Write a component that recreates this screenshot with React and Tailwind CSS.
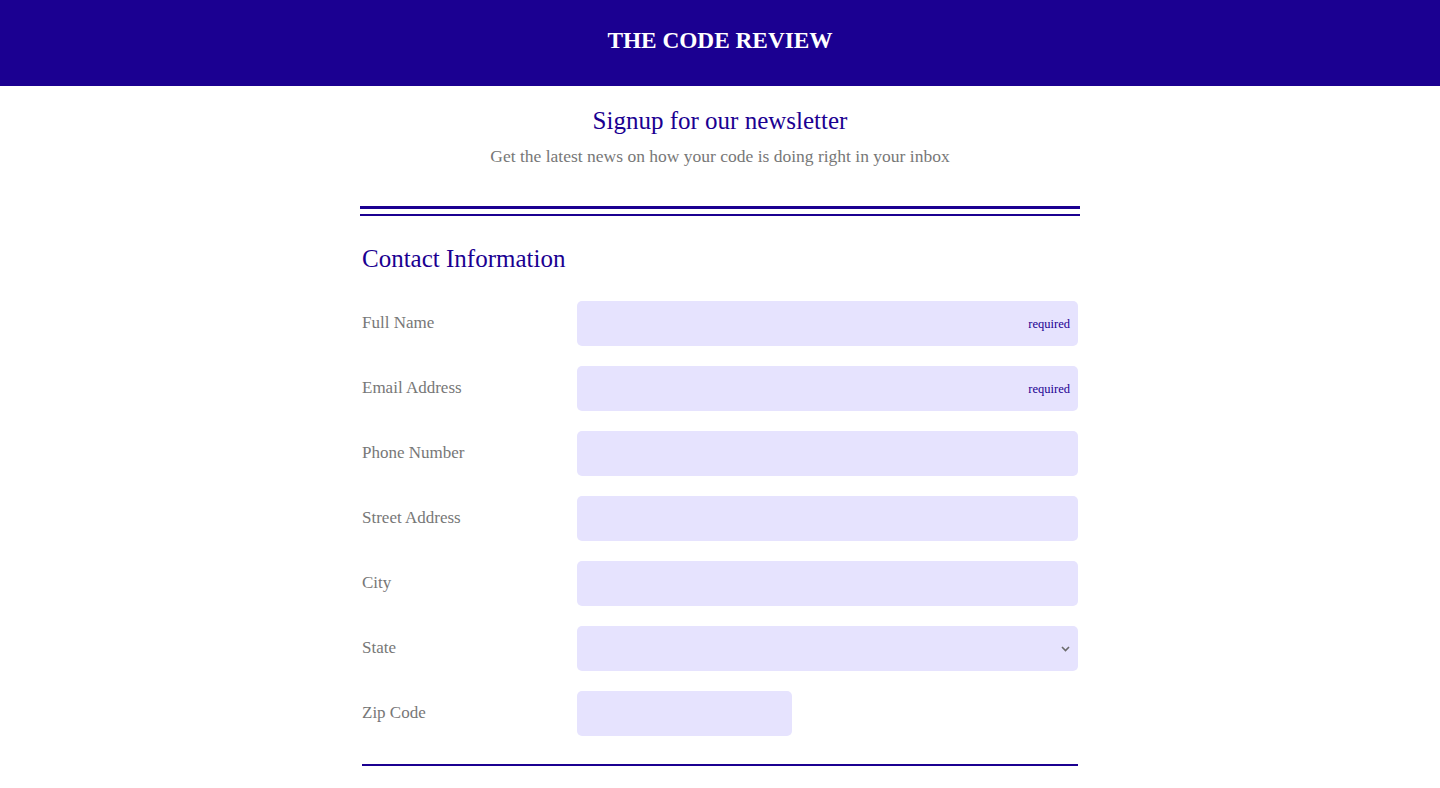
import React from "react";

const serif = "font-['Liberation_Serif','DejaVu_Serif',serif]";

const Field = ({ label, required, select, narrow }) => (
    <div className="flex items-center h-[45px]">
        <label className="w-[215px] shrink-0 text-[17px] text-[#777777] -mt-[2px]">{label}</label>
        <div className={`relative h-full ${narrow ? "w-[215px]" : "flex-1"}`}>
            {select ? (
                <select className="w-full h-full rounded-[5px] bg-[#e6e3fe] appearance-none outline-none" />
            ) : (
                <input className="w-full h-full rounded-[5px] bg-[#e6e3fe] outline-none px-3" />
            )}
            {required && (
                <span className="absolute right-[8px] top-1/2 -translate-y-1/2 text-[12.5px] text-[#1b0091]">
                    required
                </span>
            )}
            {select && (
                <svg
                    className="absolute right-[8px] top-1/2 -translate-y-1/2"
                    width="9"
                    height="6"
                    viewBox="0 0 9 6"
                    fill="none"
                >
                    <path d="M1 1l3.5 3.5L8 1" stroke="#6b6b6b" strokeWidth="1.6" />
                </svg>
            )}
        </div>
    </div>
);

export default function App() {
    return (
        <div className={`min-h-screen bg-white ${serif}`}>
            {/* Header */}
            <header className="h-[86px] bg-[#1b0091] flex items-center justify-center pb-[6px]">
                <h1 className="text-white font-bold text-[23.3px]">THE CODE REVIEW</h1>
            </header>

            <main className="w-[720px] mx-auto flex flex-col">
                {/* Intro */}
                <div className="text-center pt-[20px]">
                    <h2 className="text-[25px] leading-[30px] text-[#1b0091]">Signup for our newsletter</h2>
                    <p className="mt-[8px] text-[17.5px] leading-[24px] text-[#777777]">
                        Get the latest news on how your code is doing right in your inbox
                    </p>
                </div>

                {/* Double rule */}
                <div className="mt-[38px] flex flex-col gap-[5px]">
                    <div className="h-[3px] bg-[#1b0091]" />
                    <div className="h-[2px] bg-[#1b0091]" />
                </div>

                <section className="px-[2px]">
                    <h3 className="mt-[28px] text-[25px] leading-[30px] text-[#1b0091]">Contact Information</h3>

                    <form className="mt-[27px] flex flex-col gap-[20px]">
                        <Field label="Full Name" required />
                        <Field label="Email Address" required />
                        <Field label="Phone Number" />
                        <Field label="Street Address" />
                        <Field label="City" />
                        <Field label="State" select />
                        <Field label="Zip Code" narrow />
                    </form>

                    <div className="mt-[28px] h-[2px] bg-[#1b0091]" />
                </section>
            </main>
        </div>
    );
}
